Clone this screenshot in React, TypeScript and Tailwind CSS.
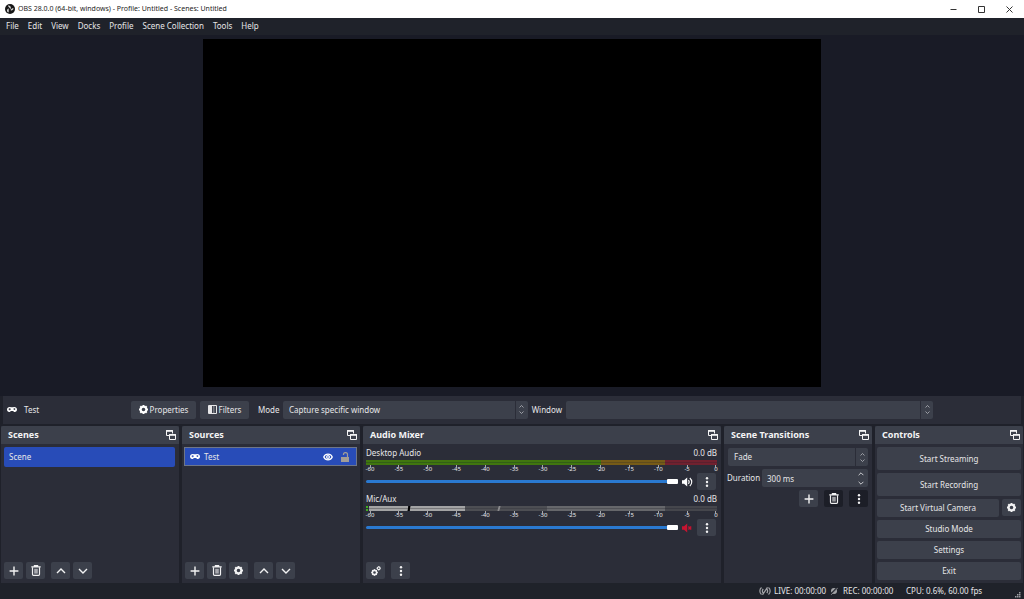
import React from 'react'

interface IconProps {
    className?: string
}

function PlusIcon({ className = 'size-[10px]' }: IconProps) {
    return (
        <svg className={className} viewBox="0 0 10 10" fill="none" stroke="currentColor" strokeWidth="1.4">
            <path d="M5 .6v8.800M.6 5h8.800" />
        </svg>
    )
}

function TrashIcon() {
    return (
        <svg className="h-[11px] w-[10px]" viewBox="0 0 10 11" fill="none" stroke="currentColor" strokeWidth="1.200">
            <path d="M.3 1.900h9.400M3.400 1.600V.6h3.200v1" />
            <path d="M1.500 2.200v7.100c0 .6.400 1.100 1 1.100h5c.6 0 1-.5 1-1.100V2.200" />
            <path d="M3.200 3.800h3.600v4.800H3.200z" fill="currentColor" stroke="none" opacity=".6" />
        </svg>
    )
}

function ChevronIcon({ up = false, className = 'h-[6px] w-[10px]' }: IconProps & { up?: boolean }) {
    return (
        <svg className={className} viewBox="0 0 10 6" fill="none" stroke="currentColor" strokeWidth="1.400">
            <path d={up ? 'M1 5l4-4 4 4' : 'M1 1l4 4 4-4'} />
        </svg>
    )
}

function GearIcon({ className = 'size-[10px]' }: IconProps) {
    return (
        <svg className={className} viewBox="0 0 20 20" fill="none" stroke="currentColor">
            <circle cx="10" cy="10" r="6.200" strokeWidth="4.400" />
            <path d="M10 0v3M10 17v3M0 10h3M17 10h3M2.900 2.900l2.200 2.200M14.900 14.900l2.200 2.200M2.900 17.100l2.200-2.200M14.900 5.100l2.200-2.200" strokeWidth="4.400" />
        </svg>
    )
}

function GearsIcon() {
    return (
        <svg className="size-[10px]" viewBox="0 0 20 20" fill="none" stroke="currentColor">
            <circle cx="7" cy="13" r="4.300" strokeWidth="3.200" />
            <path d="M7 6.500v2M7 17.500v2M.5 13h2M11.500 13h2M2.400 8.400l1.400 1.400M10.200 16.200l1.400 1.400M2.400 17.600l1.400-1.400M10.200 9.800l1.400-1.400" strokeWidth="2.400" />
            <circle cx="15.500" cy="4.500" r="2.700" strokeWidth="2.200" />
            <path d="M15.500 0v1M15.500 8v1M11 4.500h1M19 4.500h1" strokeWidth="2" />
        </svg>
    )
}

function DotsIcon() {
    return (
        <svg className="h-[10px] w-[4px]" viewBox="0 0 4 10" fill="currentColor">
            <circle cx="2" cy="1.300" r="1.200" />
            <circle cx="2" cy="5" r="1.200" />
            <circle cx="2" cy="8.700" r="1.200" />
        </svg>
    )
}

function GamepadIcon() {
    return (
        <svg className="h-[5px] w-[10px] shrink-0 text-white" viewBox="0 0 20 12" preserveAspectRatio="none" fill="currentColor">
            <path
                fillRule="evenodd"
                d="M5.500 0C2.300 0 0 2.600 0 6s1.900 6 4.400 6C6.300 12 7 9.300 8.200 9.300h3.600c1.200 0 1.900 2.700 3.800 2.700C18.100 12 20 9.400 20 6s-2.300-6-5.500-6c-1.700 0-2.200.8-3.300.8H8.800C7.700.8 7.200 0 5.500 0zM4.500 2.800h1.800v1.500h1.500v1.800H6.300v1.500H4.500V6.100H3V4.300h1.500zM14.800 3a2 2 0 110 4 2 2 0 010-4z"
            />
        </svg>
    )
}

function PopOutIcon() {
    return (
        <svg className="size-[10px]" viewBox="0 0 10 10" fill="none" stroke="currentColor">
            <path d="M3.500 5.500h-3v-5h6v3" />
            <path d="M0 1h7" strokeWidth="1.600" />
            <path d="M3.500 4.500h6v5h-6z" />
            <path d="M3 5h7" strokeWidth="1.600" />
        </svg>
    )
}

function FilterIcon() {
    return (
        <svg className="h-[9px] w-[9px]" viewBox="0 0 9 9" fill="none" stroke="currentColor">
            <path d="M.5.5h8v8h-8z" />
            <path d="M1 1h3v7H1z" fill="currentColor" stroke="none" />
            <path d="M5 1h1.500v7H5z" fill="currentColor" stroke="none" opacity=".35" />
        </svg>
    )
}

function SpeakerIcon({ muted = false }: { muted?: boolean }) {
    return (
        <svg className="h-[10px] w-[11px]" viewBox="0 0 11 10" fill="none" stroke="currentColor" strokeWidth="1.100">
            <path d="M0 3.200h2L5.200.6v8.800L2 6.800H0z" fill="currentColor" stroke="none" />
            {muted ? (
                <path d="M6.400 3.500l2.800 3M9.200 3.500l-2.800 3" strokeWidth="1.500" />
            ) : (
                <path d="M6.400 3.200c.9 1 .9 2.600 0 3.600M7.800 1c2.600 2.200 2.600 5.800 0 8" />
            )}
        </svg>
    )
}

function ObsLogo() {
    return (
        <svg className="size-[10px]" viewBox="0 0 20 20">
            <circle cx="10" cy="10" r="10" fill="#171717" />
            <g fill="#dcdcdc">
                <path d="M6 3.200c3.200-.8 6 1.300 5.700 4.600-.1 1-.5 1.700-1 2.300C9.400 7.200 6.200 6.800 6 3.200z" />
                <path d="M17.200 9.200c-.8 3.200-4 4.600-6.700 2.700 1.600-.6 2.300-2.200 3.600-2.900 1-.5 2.100-.4 3.100.2z" />
                <path d="M6.800 17C3.900 15.700 3 12.400 5.200 9.900c.8-.7 1.600-1 2.500-1.100-1.300 2.800.9 4.700-.9 8.200z" />
            </g>
        </svg>
    )
}

function StepperIcon() {
    return (
        <span className="pointer-events-none absolute inset-y-0 right-0 flex w-[13px] flex-col items-center justify-center gap-[3px] border-l border-[#2b2d38] text-[#c4c6cb]">
            <ChevronIcon up className="h-[3px] w-[5px]" />
            <ChevronIcon className="h-[3px] w-[5px]" />
        </span>
    )
}

interface ToolButtonProps {
    label: string
    dark?: boolean
    children: React.ReactNode
}

function ToolButton({ label, dark = false, children }: ToolButtonProps) {
    return (
        <button
            type="button"
            aria-label={label}
            className={`flex h-[17px] w-[19px] shrink-0 items-center justify-center rounded-[2px] text-[#f2f2f3] ${dark ? 'bg-[#1c1e27]' : 'bg-[#3c404b]'}`}
        >
            {children}
        </button>
    )
}

interface DockProps {
    title: string
    children: React.ReactNode
}

function Dock({ title, children }: DockProps) {
    return (
        <section className="flex min-w-0 flex-col bg-[#2b2d38]">
            <header className="flex h-[18px] shrink-0 items-center justify-between rounded-t-[2px] bg-[#3c404b] pr-[3px] pl-[7px] text-[#f4f4f5]">
                <h2 className="text-[9px] font-bold">{title}</h2>
                <button type="button" aria-label={`Undock ${title}`}>
                    <PopOutIcon />
                </button>
            </header>
            {children}
        </section>
    )
}

const menus = ['File', 'Edit', 'View', 'Docks', 'Profile', 'Scene Collection', 'Tools', 'Help']
const scale = ['-60', '-55', '-50', '-45', '-40', '-35', '-30', '-25', '-20', '-15', '-10', '-5', '0']

function ActiveMeter() {
    return (
        <div className="grid h-[5px] grid-cols-[235fr_64fr_52fr]">
            <span className="border-y-2 border-[#40760f] bg-[#335f16]" />
            <span className="border-y-2 border-[#765b17] bg-[#604c1c]" />
            <span className="border-y-2 border-[#71212f] bg-[#5c202e]" />
        </div>
    )
}

function MutedMeter() {
    return (
        <div className="grid h-[5px] grid-cols-[3fr_39fr_2fr_55fr_33fr_2fr_47fr_118fr_52fr]">
            <span className="mr-px border-y-2 border-[#3fae22] bg-[#2b2d38]" />
            <span className="border-y-2 border-[#a3a3a4] bg-[#79797b]" />
            <span className="-skew-x-12 bg-black" />
            <span className="border-y-2 border-[#a3a3a4] bg-[#79797b]" />
            <span className="border-y-2 border-[#4d4e53] bg-[#424349]" />
            <span className="-skew-x-12 bg-[#8b8b8d]" />
            <span className="border-y-2 border-[#4d4e53] bg-[#424349]" />
            <span className="border-y-2 border-[#66676b] bg-[#515257]" />
            <span className="border-y-2 border-[#45464c] bg-[#393a42]" />
        </div>
    )
}

function Channel({ name, muted = false }: { name: string; muted?: boolean }) {
    return (
        <div className="h-[46px] pr-[4px] pl-[3px]">
            <div className="flex h-[15px] items-center justify-between pt-px">
                <span>{name}</span>
                <span>0.0 dB</span>
            </div>
            {muted ? <MutedMeter /> : <ActiveMeter />}
            <div className="flex h-[8px] justify-between pr-px pl-[4px] text-[6px] leading-[8px] text-[#e8e8ea]">
                {scale.map((mark) => (
                    <span key={mark} className="relative flex w-0 justify-center">
                        <i className="absolute top-0 h-[3px] w-px bg-[#a6a7ab]" />
                        {mark}
                    </span>
                ))}
            </div>
            <div className="flex h-[17px] items-center">
                <input
                    type="range"
                    aria-label={`${name} volume`}
                    min={0}
                    max={100}
                    defaultValue={100}
                    className="h-[3px] min-w-0 flex-1 appearance-none rounded-full bg-[#2a79d0] [&::-webkit-slider-thumb]:h-[5px] [&::-webkit-slider-thumb]:w-[11px] [&::-webkit-slider-thumb]:appearance-none [&::-webkit-slider-thumb]:rounded-[1px] [&::-webkit-slider-thumb]:bg-white"
                />
                <button
                    type="button"
                    aria-label={`Mute ${name}`}
                    className={`ml-1 ${muted ? 'text-[#c51431]' : 'text-white'}`}
                >
                    <SpeakerIcon muted={muted} />
                </button>
                <span className="ml-1 pr-px">
                    <ToolButton label={`${name} options`}>
                        <DotsIcon />
                    </ToolButton>
                </span>
            </div>
        </div>
    )
}

function ControlButton({ label, tall = false }: { label: string; tall?: boolean }) {
    return (
        <button
            type="button"
            className={`w-full min-w-0 rounded-[2px] bg-[#3c404b] ${tall ? 'h-[23px]' : 'h-[18px]'}`}
        >
            {label}
        </button>
    )
}

function TitleBar() {
    return (
        <div className="flex h-[18px] shrink-0 items-center bg-white pr-px pl-[5px] text-[#1c1c1c]">
            <ObsLogo />
            <h1 className="ml-[3px] flex-1 text-[7px]">OBS 28.0.0 (64-bit, windows) - Profile: Untitled - Scenes: Untitled</h1>
            <div className="flex text-[#333333]">
                <button type="button" aria-label="Minimize" className="flex w-7 justify-center">
                    <svg className="size-[7px]" viewBox="0 0 7 7" stroke="currentColor">
                        <path d="M.5 3.500h6" />
                    </svg>
                </button>
                <button type="button" aria-label="Maximize" className="flex w-7 justify-center">
                    <svg className="size-[7px]" viewBox="0 0 7 7" fill="none" stroke="currentColor">
                        <path d="M.5.5h6v6h-6z" />
                    </svg>
                </button>
                <button type="button" aria-label="Close" className="flex w-7 justify-center">
                    <svg className="size-[7px]" viewBox="0 0 7 7" stroke="currentColor">
                        <path d="M.5.5l6 6M6.500.5l-6 6" />
                    </svg>
                </button>
            </div>
        </div>
    )
}

function SourceToolbar() {
    return (
        <div className="mr-[3px] ml-[3px] flex h-[28px] shrink-0 items-center bg-[#2b2d38] pb-px pl-[4px]">
            <GamepadIcon />
            <span className="ml-[7px] w-[107px] shrink-0">Test</span>
            <button type="button" className="flex h-[18px] w-[65px] shrink-0 items-center justify-center gap-[2px] rounded-[2px] bg-[#3c404b]">
                <GearIcon className="size-[9px] text-white" />
                Properties
            </button>
            <button type="button" className="ml-1 flex h-[18px] w-[49px] shrink-0 items-center justify-center gap-[2px] rounded-[2px] bg-[#3c404b]">
                <FilterIcon />
                Filters
            </button>
            <label htmlFor="mode" className="ml-[9px] w-[25px] shrink-0">Mode</label>
            <div className="relative h-[18px] min-w-0 flex-[245]">
                <select id="mode" className="h-full w-full appearance-none rounded-[2px] bg-[#3c404b] pl-[6px]">
                    <option>Capture specific window</option>
                </select>
                <StepperIcon />
            </div>
            <label htmlFor="window" className="ml-1 w-[34px] shrink-0">Window</label>
            <div className="relative h-[18px] min-w-0 flex-[368]">
                <select id="window" className="h-full w-full appearance-none rounded-[2px] bg-[#3c404b] pl-[6px]">
                    <option></option>
                </select>
                <StepperIcon />
            </div>
            <span className="flex-[88]" />
        </div>
    )
}

function StatusBar() {
    return (
        <footer className="flex h-[16px] shrink-0 items-center justify-end bg-[#1f222a]">
            <svg className="h-[8px] w-[12px] text-[#a4a5a9]" viewBox="0 0 12 8" fill="none" stroke="currentColor" strokeWidth="1.200">
                <path d="M2.500.5C.3 2.300.3 5.700 2.500 7.500M9.500.5c2.200 1.800 2.200 5.200 0 7M4.200 2C3.200 3.200 3.200 4.800 4.200 6M7.800 2c1 1.200 1 2.800 0 4M3.500 7.800l5-7.500" />
            </svg>
            <span className="ml-[3px] w-[56px]">LIVE: 00:00:00</span>
            <svg className="size-[8px] text-[#a4a5a9]" viewBox="0 0 8 8">
                <circle cx="4" cy="4" r="3" fill="currentColor" />
                <path d="M.5 7.500l7-7" stroke="#1f222a" strokeWidth="1.600" />
                <path d="M1.200 7.800l6.600-7" stroke="currentColor" strokeWidth=".8" />
            </svg>
            <span className="ml-[5px] w-[63px]">REC: 00:00:00</span>
            <span className="w-[108px]">CPU: 0.6%, 60.00 fps</span>
            <svg className="size-[7px] self-end text-[#9b9ca1]" viewBox="0 0 7 7" fill="currentColor">
                <path d="M5 0h1.500v1.500H5zM3 2h1.500v1.500H3zM5 2h1.500v1.500H5zM1 4h1.500v1.500H1zM3 4h1.500v1.500H3zM5 4h1.500v1.500H5z" />
            </svg>
            <span className="w-[3px]" />
        </footer>
    )
}

export default function App() {
    return (
        <div className="flex h-screen flex-col overflow-hidden bg-[#1f212a] font-['Noto_Sans','Open_Sans',sans-serif] text-[8px] leading-[12px] text-[#e6e6e8]">
            <TitleBar />
            <nav className="flex h-[17px] shrink-0 items-center gap-[9px] bg-[#1f222a] pb-px pl-[6px]">
                {menus.map((menu) => (
                    <button key={menu} type="button">
                        {menu}
                    </button>
                ))}
            </nav>
            <main className="flex min-h-0 flex-1 justify-center bg-[#191b26] pt-[4px] pb-[9px]">
                <div className="aspect-video h-full bg-black" />
            </main>
            <SourceToolbar />
            <div className="mt-[2px] grid h-[157px] shrink-0 grid-cols-[178fr_178fr_358fr_148fr_148fr] gap-[3px] px-px">
                <Dock title="Scenes">
                    <ul className="flex-1 pt-[3px] pr-[4px] pl-[3px]">
                        <li className="flex h-[20px] items-center rounded-[2px] bg-[#284cb8] pl-[5px]">Scene</li>
                    </ul>
                    <div className="flex h-[21px] gap-[3px] pl-[3px]">
                        <ToolButton label="Add scene"><PlusIcon /></ToolButton>
                        <ToolButton label="Remove scene"><TrashIcon /></ToolButton>
                        <span className="w-0" />
                        <ToolButton label="Move scene up"><ChevronIcon up /></ToolButton>
                        <ToolButton label="Move scene down"><ChevronIcon /></ToolButton>
                    </div>
                </Dock>
                <Dock title="Sources">
                    <ul className="flex-1 pt-[3px] pr-[3px] pl-[2px]">
                        <li className="flex h-[19px] items-center border border-[#6e7689] bg-[#284cb8] pr-[7px] pl-[5px]">
                            <GamepadIcon />
                            <span className="ml-[4px] flex-1">Test</span>
                            <button type="button" aria-label="Hide Test">
                                <svg className="h-[8px] w-[10px]" viewBox="0 0 20 16" fill="none" stroke="white">
                                    <path d="M1.500 8C5 .5 15 .5 18.500 8 15 15.500 5 15.500 1.500 8z" strokeWidth="2.600" />
                                    <circle cx="10" cy="8" r="2.800" strokeWidth="2.400" />
                                </svg>
                            </button>
                            <button type="button" aria-label="Lock Test" className="ml-2 text-[#a19d98]">
                                <svg className="h-[10px] w-[8px]" viewBox="0 0 8 10" fill="none" stroke="currentColor">
                                    <path d="M0 5h8v5H0z" fill="currentColor" stroke="none" />
                                    <path d="M6.500 5V2.500c0-2.600-4-2.600-4 0V3" strokeWidth="1.200" />
                                </svg>
                            </button>
                        </li>
                    </ul>
                    <div className="flex h-[21px] gap-[3px] pl-[3px]">
                        <ToolButton label="Add source"><PlusIcon /></ToolButton>
                        <ToolButton label="Remove source"><TrashIcon /></ToolButton>
                        <ToolButton label="Source properties"><GearIcon className="size-[9px]" /></ToolButton>
                        <span className="w-0" />
                        <ToolButton label="Move source up"><ChevronIcon up /></ToolButton>
                        <ToolButton label="Move source down"><ChevronIcon /></ToolButton>
                    </div>
                </Dock>
                <Dock title="Audio Mixer">
                    <div className="flex-1 pt-px">
                        <Channel name="Desktop Audio" />
                        <Channel name="Mic/Aux" muted />
                    </div>
                    <div className="flex h-[21px] gap-[6px] pl-[3px]">
                        <ToolButton label="Advanced audio properties"><GearsIcon /></ToolButton>
                        <ToolButton label="Mixer menu"><DotsIcon /></ToolButton>
                    </div>
                </Dock>
                <Dock title="Scene Transitions">
                    <div className="flex flex-col gap-[3px] pt-[4px] pr-[4px] pl-[3px]">
                        <div className="relative h-[18px] pl-px">
                            <select aria-label="Transition" className="h-full w-full appearance-none rounded-[2px] bg-[#3c404b] pl-[6px]">
                                <option>Fade</option>
                            </select>
                            <StepperIcon />
                        </div>
                        <div className="flex h-[18px] items-center">
                            <label htmlFor="duration" className="w-[35px] shrink-0">Duration</label>
                            <div className="relative h-full min-w-0 flex-1">
                                <input id="duration" type="text" defaultValue="300 ms" className="block h-full w-full rounded-[2px] bg-[#3c404b] pl-[5px]" />
                                <span className="pointer-events-none absolute inset-y-0 right-[4px] flex flex-col items-center justify-center gap-[5px]">
                                    <ChevronIcon up className="h-[4px] w-[6px]" />
                                    <ChevronIcon className="h-[4px] w-[6px]" />
                                </span>
                            </div>
                        </div>
                        <div className="flex justify-end gap-[6px]">
                            <ToolButton label="Add transition"><PlusIcon /></ToolButton>
                            <ToolButton label="Remove transition" dark><TrashIcon /></ToolButton>
                            <ToolButton label="Transition properties" dark><DotsIcon /></ToolButton>
                        </div>
                    </div>
                </Dock>
                <Dock title="Controls">
                    <div className="flex flex-col gap-[3px] px-[2px] pt-[3px]">
                        <ControlButton label="Start Streaming" tall />
                        <ControlButton label="Start Recording" tall />
                        <div className="flex gap-[3px]">
                            <ControlButton label="Start Virtual Camera" />
                            <ToolButton label="Virtual camera settings"><GearIcon className="size-[9px]" /></ToolButton>
                        </div>
                        <ControlButton label="Studio Mode" />
                        <ControlButton label="Settings" />
                        <ControlButton label="Exit" />
                    </div>
                </Dock>
            </div>
            <StatusBar />
        </div>
    )
}
